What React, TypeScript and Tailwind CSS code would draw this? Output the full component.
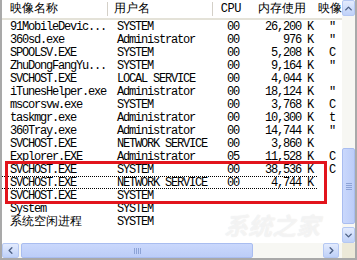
import { ChevronUp, ChevronDown, ChevronLeft, ChevronRight } from 'lucide-react';

type Row = [string, string, string, string, string];

const rows: Row[] = [
  ['91MobileDevic...', 'SYSTEM', '00', '26,200 K', '"'],
  ['360sd.exe', 'Administrator', '00', '976 K', '"'],
  ['SPOOLSV.EXE', 'SYSTEM', '00', '5,208 K', 'C'],
  ['ZhuDongFangYu...', 'SYSTEM', '00', '9,164 K', '"'],
  ['SVCHOST.EXE', 'LOCAL SERVICE', '00', '4,044 K', ''],
  ['iTunesHelper.exe', 'Administrator', '00', '18,124 K', '"'],
  ['mscorsvw.exe', 'SYSTEM', '00', '3,768 K', 'C'],
  ['taskmgr.exe', 'Administrator', '00', '10,300 K', 't'],
  ['360Tray.exe', 'Administrator', '00', '14,744 K', '"'],
  ['SVCHOST.EXE', 'NETWORK SERVICE', '00', '3,860 K', ''],
  ['Explorer.EXE', 'Administrator', '05', '11,528 K', 'C'],
  ['SVCHOST.EXE', 'SYSTEM', '00', '38,536 K', 'C'],
  ['SVCHOST.EXE', 'NETWORK SERVICE', '00', '4,744 K', ''],
  ['SVCHOST.EXE', 'SYSTEM', '', '', ''],
  ['System', 'SYSTEM', '', '', ''],
  ['系统空闲进程', 'SYSTEM', '', '', ''],
];

const ArrowBtn = ({ children, className = '' }: { children: React.ReactNode; className?: string }) => (
  <div
    className={`flex items-center justify-center rounded-[2px] border border-[#b5c8f3] bg-gradient-to-b from-[#e3ebfd] to-[#bfd1f8] text-[#4d6185] ${className}`}
  >
    {children}
  </div>
);

export default function App() {
  return (
    <div className="relative w-[357px] h-[260px] flex flex-col bg-white overflow-hidden border-x-2 border-b-2 border-[#a9a9a9] font-mono text-black">
      <div className="flex h-[243px]">
        <div className="relative flex-1 overflow-hidden">
          {/* header */}
          <div className="flex h-[20px] items-center border-b-2 border-[#e4e2d8] text-[12px] leading-none">
            <div className="w-[109px] h-[14px] pl-[8px] border-r border-[#d4d0c8] flex items-center">映像名称</div>
            <div className="w-[108px] h-[14px] pl-[6px] border-r border-[#d4d0c8] flex items-center">用户名</div>
            <div className="w-[40px] pl-[8px] tracking-[-0.5px]">CPU</div>
            <div className="w-[58px] pr-[2px] text-right">内存使用</div>
            <div className="pl-[10px] whitespace-nowrap">映像</div>
          </div>

          {/* rows */}
          <div className="text-[12px] tracking-[-1.2px] leading-none">
            {rows.map((r, i) => (
              <div key={i} className="flex h-[13px] whitespace-nowrap">
                <div
                  className={
                    i === 12
                      ? 'flex w-[315px] items-center border-y border-dotted border-black'
                      : 'flex w-[315px] items-center'
                  }
                >
                  <div className={i === 15 ? 'w-[109px] pl-[8px] tracking-normal' : 'w-[109px] pl-[8px]'}>
                    {r[0]}
                  </div>
                  <div className="w-[108px] pl-[6px]">{r[1]}</div>
                  <div className="w-[40px] pl-[8px]">{r[2]}</div>
                  <div className="w-[58px] pr-[4px] text-right">{r[3]}</div>
                </div>
                <div className="flex items-center pl-[12px]">{r[4]}</div>
              </div>
            ))}
          </div>

          {/* annotation box */}
          <div className="absolute left-[3px] top-[161px] w-[322px] h-[43px] border-[3px] border-[#e2141c]" />
        </div>

        {/* vertical scrollbar */}
        <div className="w-[13px] flex flex-col bg-[#f7f7f3]">
          <ArrowBtn className="h-[16px]">
            <ChevronUp size={11} strokeWidth={3} />
          </ArrowBtn>
          <div className="flex-1 flex flex-col pt-[132px] pb-[2px]">
            <div className="h-[76px] rounded-[2px] border border-[#a9bdf0] bg-gradient-to-r from-[#cad8fc] to-[#bccdf8] flex items-center justify-center">
              <div className="flex flex-col gap-[1px]">
                <div className="w-[6px] h-[1px] bg-[#8da3d6]" />
                <div className="w-[6px] h-[1px] bg-[#8da3d6]" />
                <div className="w-[6px] h-[1px] bg-[#8da3d6]" />
                <div className="w-[6px] h-[1px] bg-[#8da3d6]" />
              </div>
            </div>
          </div>
          <ArrowBtn className="h-[16px]">
            <ChevronDown size={11} strokeWidth={3} />
          </ArrowBtn>
        </div>
      </div>

      {/* horizontal scrollbar */}
      <div className="flex h-[15px]">
        <div className="flex-1 flex bg-[#f7f7f3] pr-[3px]">
          <ArrowBtn className="w-[17px]">
            <ChevronLeft size={11} strokeWidth={3} />
          </ArrowBtn>
          <div className="flex-1 flex pl-[2px] pr-[70px]">
            <div className="flex-1 rounded-[2px] border border-[#a9bdf0] bg-gradient-to-b from-[#cad8fc] to-[#bccdf8] flex items-center justify-center gap-[1px]">
              <div className="w-[1px] h-[6px] bg-[#8da3d6]" />
              <div className="w-[1px] h-[6px] bg-[#8da3d6]" />
              <div className="w-[1px] h-[6px] bg-[#8da3d6]" />
              <div className="w-[1px] h-[6px] bg-[#8da3d6]" />
            </div>
          </div>
          <ArrowBtn className="w-[16px]">
            <ChevronRight size={11} strokeWidth={3} />
          </ArrowBtn>
        </div>
        <div className="w-[13px] bg-[#ece9d8]" />
      </div>

      {/* faint watermark */}
      <div className="pointer-events-none absolute left-[222px] top-[213px] text-[24px] font-bold italic leading-none text-white/60 [text-shadow:0_0_1px_#e2e2e2] font-[family-name:Noto_Sans_CJK_SC,sans-serif]">
        系统之家
      </div>
    </div>
  );
}
